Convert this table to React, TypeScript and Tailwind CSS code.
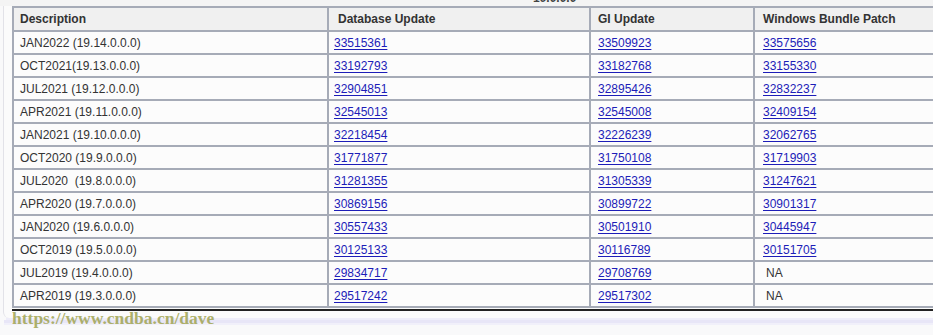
import React from "react";

type Row = {
  desc: string;
  db: string;
  gi: string;
  win: string;
};

const rows: Row[] = [
  { desc: "JAN2022 (19.14.0.0.0)", db: "33515361", gi: "33509923", win: "33575656" },
  { desc: "OCT2021(19.13.0.0.0)", db: "33192793", gi: "33182768", win: "33155330" },
  { desc: "JUL2021 (19.12.0.0.0)", db: "32904851", gi: "32895426", win: "32832237" },
  { desc: "APR2021 (19.11.0.0.0)", db: "32545013", gi: "32545008", win: "32409154" },
  { desc: "JAN2021 (19.10.0.0.0)", db: "32218454", gi: "32226239", win: "32062765" },
  { desc: "OCT2020 (19.9.0.0.0)", db: "31771877", gi: "31750108", win: "31719903" },
  { desc: "JUL2020  (19.8.0.0.0)", db: "31281355", gi: "31305339", win: "31247621" },
  { desc: "APR2020 (19.7.0.0.0)", db: "30869156", gi: "30899722", win: "30901317" },
  { desc: "JAN2020 (19.6.0.0.0)", db: "30557433", gi: "30501910", win: "30445947" },
  { desc: "OCT2019 (19.5.0.0.0)", db: "30125133", gi: "30116789", win: "30151705" },
  { desc: "JUL2019 (19.4.0.0.0)", db: "29834717", gi: "29708769", win: "NA" },
  { desc: "APR2019 (19.3.0.0.0)", db: "29517242", gi: "29517302", win: "NA" },
];

const Link: React.FC<{ children: React.ReactNode }> = ({ children }) => (
  <a href="#" className="text-[#1d1db8] underline underline-offset-[2px]">
    {children}
  </a>
);

const App: React.FC = () => {
  return (
    <div className="relative w-[933px] h-[335px] overflow-hidden bg-[#f9f9fa] font-['Liberation_Sans',Arial,sans-serif] text-[12px] text-[#333]">
      {/* caption, mostly scrolled off the top */}
      <div className="h-[6px] overflow-hidden bg-[#f4f4f4]">
        <div className="-mt-[9px] pl-[533px] leading-[14px] font-bold text-[#444]">19.0.0.0</div>
      </div>

      <div className="ml-[3px] w-[1200px] rounded-bl-[6px] border-l border-[#e2e2e8] bg-[#fbfbfb] pl-[8px] pb-[7px]">
        <div className="w-[1100px] border-t-2 border-l-2 border-[#a6abb7]">
          {/* header */}
          <div className="flex h-[24px] items-center border-b-2 border-[#a6abb7] bg-[#f0f0f0] font-bold leading-[14px]">
            <div className="flex h-full w-[315px] items-center border-r-2 border-[#a6abb7] pl-[6px]">Description</div>
            <div className="flex h-full w-[262px] items-center border-r-2 border-[#a6abb7] pl-[9px]">Database Update</div>
            <div className="flex h-full w-[164px] items-center border-r-2 border-[#a6abb7] pl-[7px]">GI Update</div>
            <div className="flex h-full flex-1 items-center border-r-2 border-[#a6abb7] pl-[8px]">Windows Bundle Patch</div>
          </div>

          {rows.map((r) => (
            <div key={r.desc} className="flex h-[23px] items-center border-b-2 border-[#a6abb7] bg-[#fcfcfc] leading-[14px]">
              <div className="flex h-full w-[315px] items-center whitespace-pre border-r-2 border-[#a6abb7] pl-[6px]">{r.desc}</div>
              <div className="flex h-full w-[262px] items-center border-r-2 border-[#a6abb7] pl-[5px]">
                <Link>{r.db}</Link>
              </div>
              <div className="flex h-full w-[164px] items-center border-r-2 border-[#a6abb7] pl-[7px]">
                <Link>{r.gi}</Link>
              </div>
              <div className="flex h-full flex-1 items-center border-r-2 border-[#a6abb7] pl-[8px]">
                {r.win === "NA" ? <span className="pl-[3px]">NA</span> : <Link>{r.win}</Link>}
              </div>
            </div>
          ))}
        </div>
        <div className="mt-[1px] h-[2px] w-[1100px] bg-[#222]" />
      </div>
      {/* soft lavender shadow under the panel */}
      <div className="ml-[6px] h-[2px] bg-[#eeedf9]" />
      <div className="ml-[4px] h-[3px] bg-[#e8e6f7]" />
      <div className="ml-[4px] h-[2px] bg-[#f1f0fa]" />

      {/* watermark */}
      <div className="absolute left-[12px] top-[310px] font-['Liberation_Serif',serif] text-[17.5px] font-bold leading-none text-[#a5a95c] opacity-90">
        https://www.cndba.cn/dave
      </div>
    </div>
  );
};

export default App;
